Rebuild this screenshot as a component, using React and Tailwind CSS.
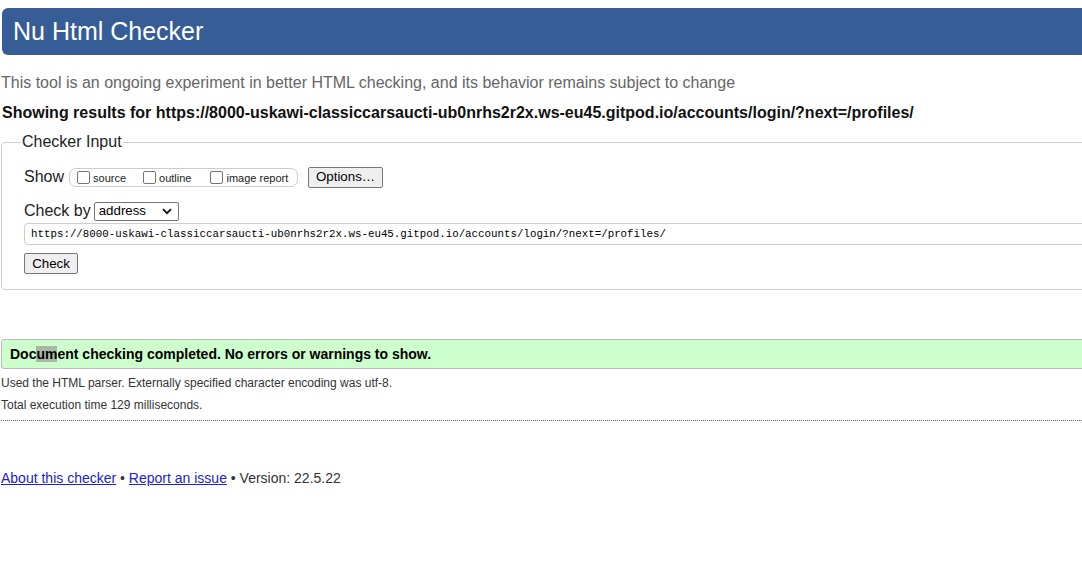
const url =
  "https://8000-uskawi-classiccarsaucti-ub0nrhs2r2x.ws-eu45.gitpod.io/accounts/login/?next=/profiles/";

// Nu Html Checker result page
export default function App() {
  return (
    <div className="w-full min-h-[563px] overflow-hidden bg-white font-['Liberation_Sans',Arial,sans-serif] text-[#222]">
      <div className="w-[1110px]">
        {/* header bar */}
        <div className="mt-2 ml-[2px] h-[47px] bg-[#365d95] rounded-l-[6px] flex items-center pl-[11px]">
          <h1 className="text-[25px] text-white leading-none">Nu Html Checker</h1>
        </div>

        <p className="mt-[18px] ml-[1px] text-[16px] text-[#666] leading-[20px]">
          This tool is an ongoing experiment in better HTML checking, and its behavior remains subject to change
        </p>
        <p className="mt-[10px] ml-[2px] text-[16px] font-bold text-[#111] leading-[20px]">
          Showing results for {url}
        </p>

        {/* checker input */}
        <fieldset className="mt-[9px] ml-[1px] border border-[#ccc] rounded-[4px] pl-[22px] pb-[14px] h-[158px]">
          <legend className="ml-[-3px] px-[1px] text-[16px] text-[#222] leading-[20px]">Checker Input</legend>

          <div className="mt-[14px] flex items-center h-[22px]">
            <span className="text-[16px] leading-none">Show</span>
            <div className="ml-[5px] h-[19px] w-[229px] border border-[#ccc] rounded-[7px] flex items-center pl-[7px]">
              <label className="flex items-center">
                <span className="w-[13px] h-[13px] border border-[#767676] rounded-[2px] bg-white" />
                <span className="ml-[3px] text-[11px] leading-none mt-[2px]">source</span>
              </label>
              <label className="flex items-center ml-[17px]">
                <span className="w-[13px] h-[13px] border border-[#767676] rounded-[2px] bg-white" />
                <span className="ml-[3px] text-[11px] leading-none mt-[2px]">outline</span>
              </label>
              <label className="flex items-center ml-[19px]">
                <span className="w-[13px] h-[13px] border border-[#767676] rounded-[2px] bg-white" />
                <span className="ml-[3px] text-[11px] leading-none mt-[2px]">image report</span>
              </label>
            </div>
            <button className="ml-[10px] h-[21px] w-[75px] border border-[#767676] rounded-[2px] bg-[#efefef] text-[13.3px] leading-none text-black">
              Options…
            </button>
          </div>

          <div className="mt-[13px] flex items-center h-[20px]">
            <span className="text-[16px] leading-none">Check by</span>
            <div className="ml-[3px] h-[19px] w-[85px] border border-[#767676] rounded-[2px] flex items-center justify-between px-[4px]">
              <span className="text-[13.3px] leading-none text-black">address</span>
              <svg width="10" height="7" viewBox="0 0 10 7" className="mr-[2px]">
                <path d="M1 1.2 L5 5.2 L9 1.2" fill="none" stroke="#111" strokeWidth="1.8" />
              </svg>
            </div>
          </div>

          <div className="mt-[2px] h-[22px] border border-[#ccc] rounded-l-[4px] flex items-center pl-[6px]">
            <span className="font-['Liberation_Mono','DejaVu_Sans_Mono',monospace] text-[10.8px] leading-none text-black">
              {url}
            </span>
          </div>

          <button className="mt-[8px] h-[21px] w-[54px] border border-[#767676] rounded-[2px] bg-[#efefef] text-[13.3px] leading-none text-black">
            Check
          </button>
        </fieldset>

        {/* result */}
        <div className="mt-[49px] ml-[1px] h-[30px] bg-[#ccffcc] border border-[#bbb] rounded-l-[3px] flex items-center pl-[8px]">
          <p className="text-[14px] font-bold text-black leading-none">
            Doc<span className="bg-[#999]/70">um</span>ent checking completed. No errors or warnings to show.
          </p>
        </div>

        <p className="mt-[7px] ml-[1px] text-[12px] text-[#333] leading-[15px]">
          Used the HTML parser. Externally specified character encoding was utf-8.
        </p>
        <p className="mt-[7px] ml-[1px] text-[12px] text-[#333] leading-[15px]">
          Total execution time 129 milliseconds.
        </p>
        <div className="mt-[7px] ml-[1px] border-t border-dotted border-[#666]" />

        <p className="mt-[48px] ml-[1px] text-[14px] text-[#333] leading-[18px]">
          <a href="#" className="underline text-[#2222cc]">About this checker</a>
          {" • "}
          <a href="#" className="underline text-[#2222cc]">Report an issue</a>
          {" • Version: 22.5.22"}
        </p>
      </div>
    </div>
  );
}
